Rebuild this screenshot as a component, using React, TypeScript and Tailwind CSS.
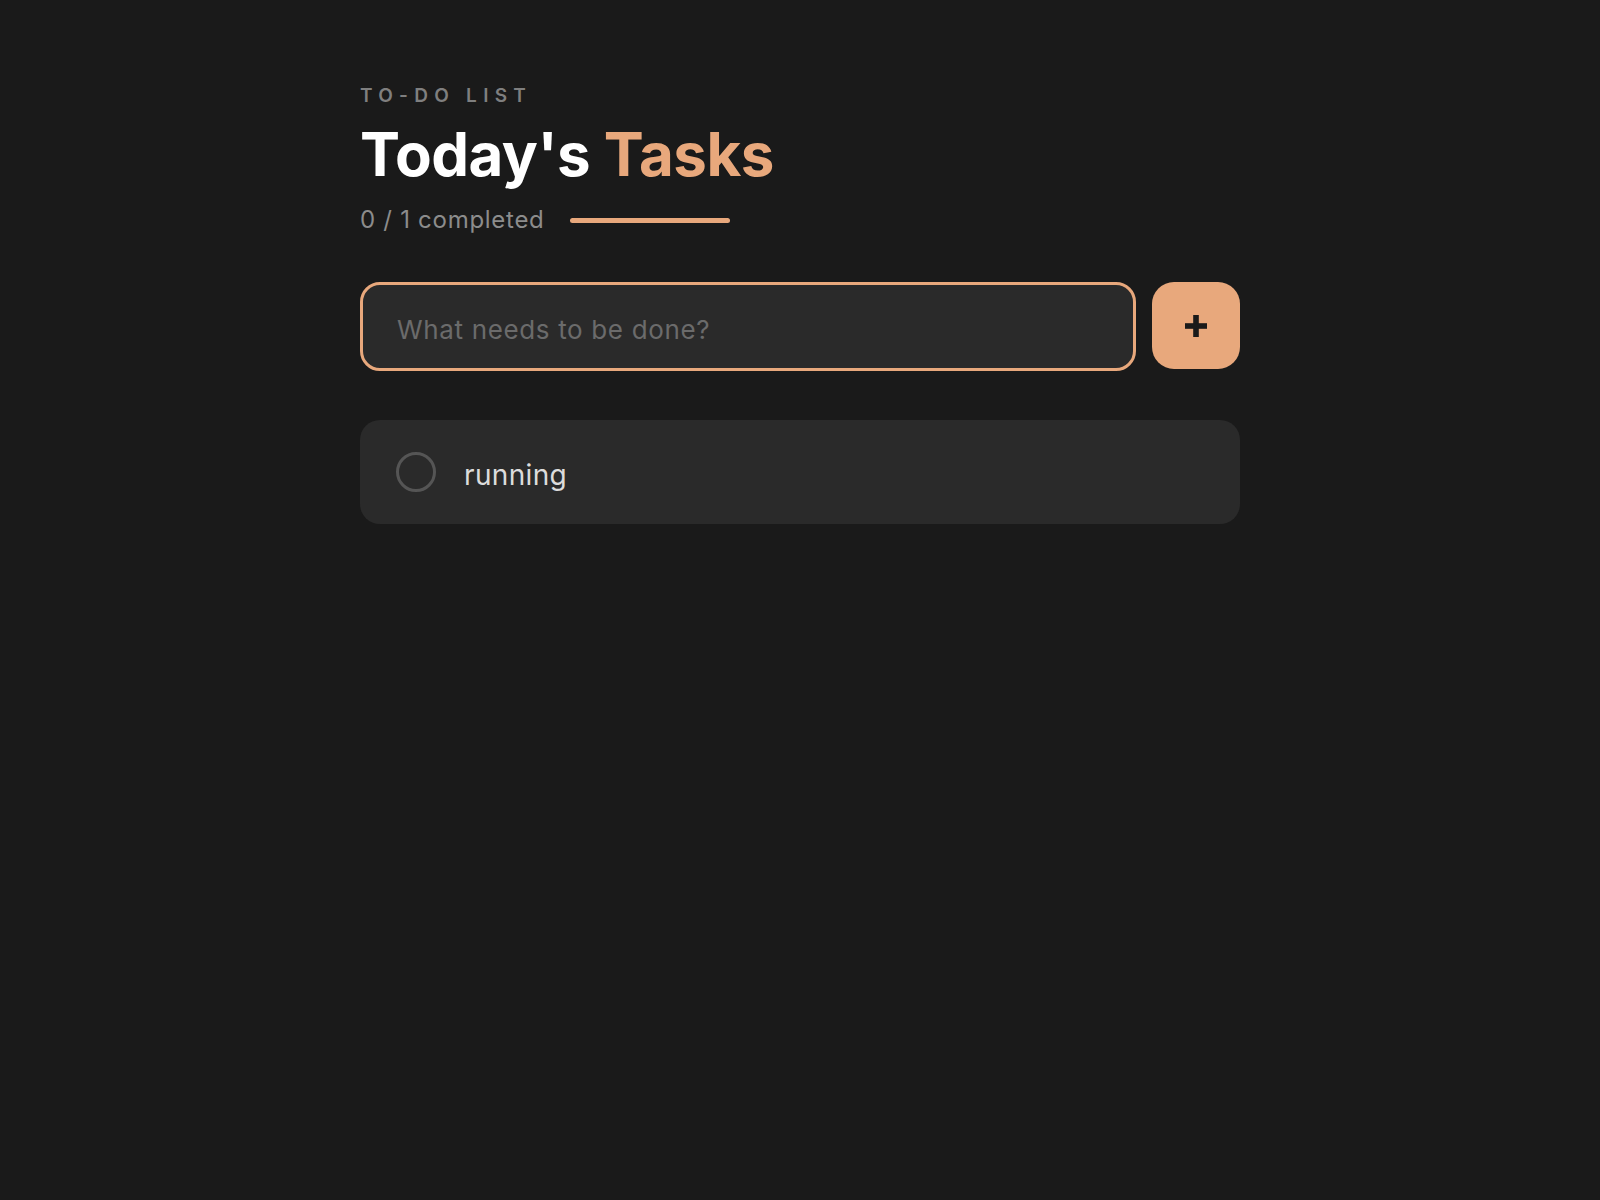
import React from "react";

export default function App() {
  return (
    <div
      className="min-h-screen w-full bg-[#1a1a1a]"
      style={{ fontFamily: "Inter, 'Noto Sans', sans-serif" }}
    >
      <div className="mx-auto w-[880px] pt-[86px]">
        <div className="text-[19px] leading-[19px] font-semibold tracking-[0.33em] text-[#7f7f7f] uppercase">
          To-do list
        </div>
        <h1 className="mt-[19px] text-[60px] leading-[60px] font-bold text-white tracking-[-0.008em]">
          Today's <span className="text-[#e8a87c]">Tasks</span>
        </h1>
        <div className="mt-[24px] flex items-center gap-[25px]">
          <span className="text-[24px] leading-[24px] tracking-[0.03em] text-[#8c8c8c]">0 / 1 completed</span>
          <div className="h-[5px] w-[160px] rounded-full bg-[#e8a87c]" />
        </div>
        <div className="mt-[50px] flex items-start gap-4">
          <input
            type="text"
            placeholder="What needs to be done?"
            className="h-[89px] flex-1 rounded-[20px] border-[3px] border-[#e8a87c] bg-[#2a2a2a] px-[34px] pt-[5px] text-[26px] tracking-[0.025em] text-white outline-none placeholder:text-[#6b6b6b]"
          />
          <button className="flex h-[87px] w-[88px] items-center justify-center rounded-[22px] bg-[#e8a87c]">
            <svg width="22" height="22" viewBox="0 0 22 22">
              <rect x="8.2" y="0" width="5.6" height="22" fill="#1a1a1a" />
              <rect x="0" y="8.2" width="22" height="5.6" fill="#1a1a1a" />
            </svg>
          </button>
        </div>
        <div className="mt-[49px] flex h-[104px] items-center gap-[28px] rounded-[20px] bg-[#2a2a2a] px-[36px]">
          <div className="h-[40px] w-[40px] shrink-0 rounded-full border-[3px] border-[#555555]" />
          <span className="pt-[5px] text-[28px] tracking-[0.012em] text-[#dcdcdc]">running</span>
        </div>
      </div>
    </div>
  );
}
